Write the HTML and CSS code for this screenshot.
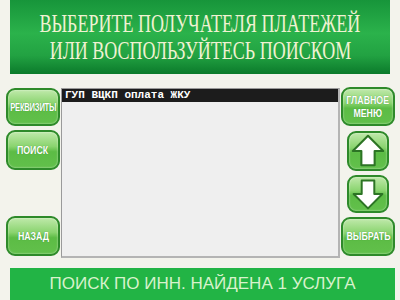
FILE: index.html
```html
<!DOCTYPE html>
<html lang="ru">
<head>
    <meta charset="UTF-8">
    <title>Выбор получателя</title>
    <link rel="stylesheet" href="styles.css">
</head>
<body>
    <div class="screen">
        <div class="header">
            <span class="header-line">ВЫБЕРИТЕ ПОЛУЧАТЕЛЯ ПЛАТЕЖЕЙ</span>
            <span class="header-line">ИЛИ ВОСПОЛЬЗУЙТЕСЬ ПОИСКОМ</span>
        </div>

        <div class="main">
            <div class="side side-left">
                <button class="btn btn-small"><span class="btn-text btn-text-tight">РЕКВИЗИТЫ</span></button>
                <button class="btn btn-tall"><span class="btn-text">ПОИСК</span></button>
                <button class="btn btn-tall btn-bottom"><span class="btn-text">НАЗАД</span></button>
            </div>

            <div class="list">
                <div class="list-row selected">ГУП ВЦКП оплата ЖКУ</div>
            </div>

            <div class="side side-right">
                <button class="btn btn-two"><span class="btn-text">ГЛАВНОЕ<br>МЕНЮ</span></button>
                <button class="btn btn-arrow btn-up">
                    <svg viewBox="0 0 40 40" width="38" height="38">
                        <polygon points="20,4 36,20 27,20 27,35 13,35 13,20 4,20" fill="#fff" stroke="#2c7424" stroke-width="2.2" stroke-linejoin="round"/>
                    </svg>
                </button>
                <button class="btn btn-arrow btn-down">
                    <svg viewBox="0 0 40 40" width="36" height="36">
                        <polygon points="20,36 36,20 27,20 27,5 13,5 13,20 4,20" fill="#fff" stroke="#2c7424" stroke-width="2.2" stroke-linejoin="round"/>
                    </svg>
                </button>
                <button class="btn btn-select"><span class="btn-text">ВЫБРАТЬ</span></button>
            </div>
        </div>

        <div class="footer">ПОИСК ПО ИНН. НАЙДЕНА 1 УСЛУГА</div>
    </div>
</body>
</html>
```

FILE: styles.css
```css
body {
    margin: 0;
    background-color: #f3f3ec;
    font-family: "Liberation Sans", Arial, sans-serif;
}

.screen {
    width: 400px;
    height: 300px;
    overflow: hidden;
}

/* Верхний заголовок */
.header {
    margin: 0 10px;
    height: 74px;
    display: flex;
    flex-direction: column;
    align-items: center;
    justify-content: center;
    background: linear-gradient(#17953a 0%, #2bb24b 45%, #22a242 75%, #0b7a2b 100%);
    color: #f0f2d2;
}

.header-line {
    display: block;
    white-space: nowrap;
    font-family: "Liberation Serif", "Times New Roman", serif;
    font-size: 25px;
    line-height: 27px;
    transform: scaleX(0.72);
}

/* Основная часть */
.main {
    display: flex;
    margin-top: 13px;
    height: 170px;
}

.side {
    display: flex;
    flex-direction: column;
    align-items: center;
}

.side-left {
    width: 54px;
    margin-left: 6px;
    padding-top: 1px;
    gap: 4px;
}

.side-right {
    width: 54px;
    margin-left: 1px;
    gap: 4px;
}

.list {
    width: 276px;
    margin-left: 1px;
    height: 167px;
    margin-top: 1px;
    background-color: #efefef;
    border-top: 1px solid #9a9a9a;
    border-left: 1px solid #9a9a9a;
    border-right: 2px solid #b4b4b4;
    border-bottom: 2px solid #b4b4b4;
}

.list-row {
    height: 13px;
    padding-left: 3px;
    font-family: "Liberation Mono", "Courier New", monospace;
    font-size: 11px;
    font-weight: bold;
    line-height: 13px;
    white-space: nowrap;
}

.list-row.selected {
    background-color: #1c1c1c;
    color: #fff;
}

/* Кнопки */
.btn {
    width: 54px;
    padding: 0;
    border: 2px solid #2e8a2a;
    border-radius: 9px;
    background: linear-gradient(#bfe9aa 0%, #8ad46f 40%, #5cbc45 55%, #62c04b 100%);
    box-shadow: inset 0 0 2px rgba(255, 255, 255, 0.7);
    color: #fff;
    font-family: "Liberation Sans", Arial, sans-serif;
    font-size: 11px;
    font-weight: bold;
    line-height: 13px;
    text-shadow: 0 0 1px #3c8a30;
    cursor: pointer;
    display: flex;
    align-items: center;
    justify-content: center;
    overflow: visible;
}

.btn-text {
    display: block;
    white-space: nowrap;
    transform: scaleX(0.8);
}

.btn-text-tight {
    font-size: 10px;
    letter-spacing: -0.3px;
    margin: 0 -8px;
    transform: scaleX(0.76);
}

.btn-small {
    height: 38px;
}

.btn-tall {
    height: 40px;
}

.btn-bottom {
    margin-top: auto;
    margin-bottom: 1px;
}

.btn-two {
    height: 39px;
    margin-bottom: 1px;
}

.btn-arrow {
    width: 42px;
    height: 40px;
}

.btn-down {
    height: 38px;
}

.btn-select {
    height: 39px;
}

/* Нижняя строка статуса */
.footer {
    margin: 11px 5px 0 10px;
    height: 32px;
    background-color: #22b445;
    color: #d8f2cc;
    font-size: 17px;
    line-height: 32px;
    text-align: center;
    white-space: nowrap;
}
```
